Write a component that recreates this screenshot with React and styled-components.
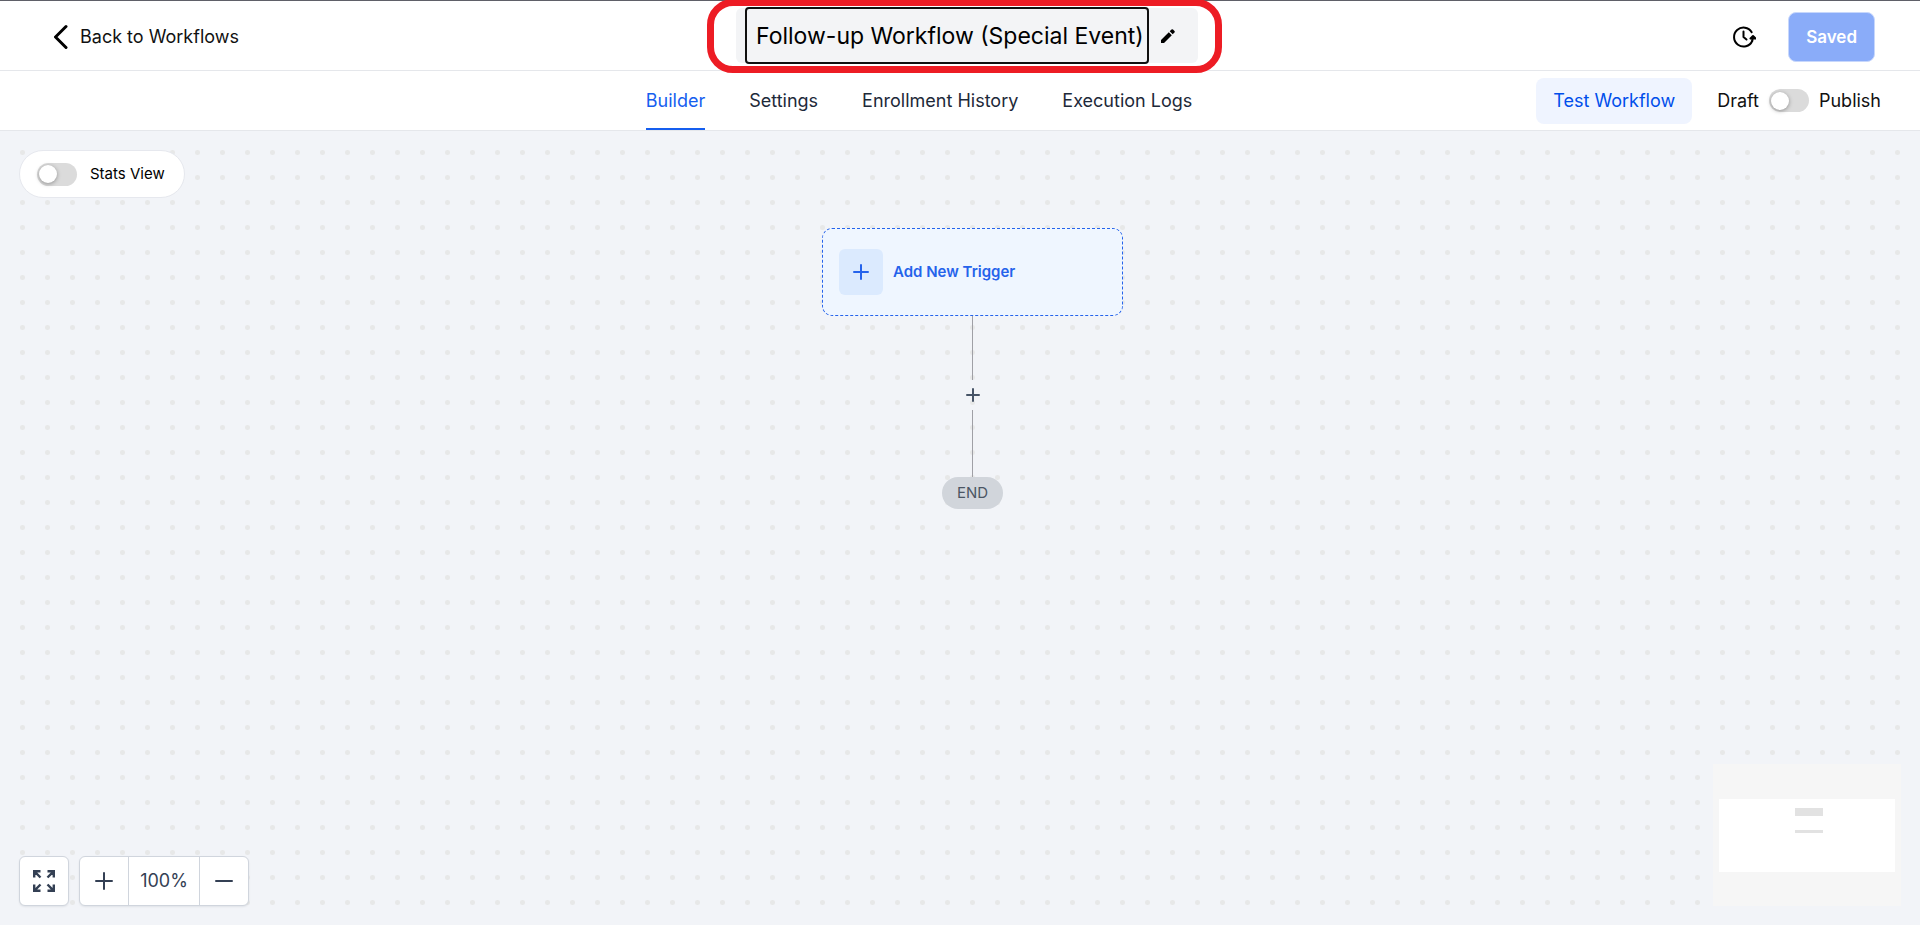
import { useState } from "react";
import styled, { createGlobalStyle } from "styled-components";

//Styles
const GlobalStyle = createGlobalStyle`
    *, *::before, *::after {
        box-sizing: border-box;
    }

    body {
        margin: 0;
        font-family: Inter, "Liberation Sans", sans-serif;
        font-size: 18px;
        line-height: 24px;
        color: #111111;
    }

    button, input {
        font: inherit;
        color: inherit;
    }

    button {
        padding: 0;
        border: 0;
        background: none;
        cursor: pointer;
    }

    svg {
        display: block;
    }
`

const Page = styled.div`
    display: flex;
    flex-direction: column;
    min-height: 100vh;
`

const TopBar = styled.header`
    display: grid;
    grid-template-columns: 1fr auto 1fr;
    align-items: center;
    height: 71px;
    padding: 2px 45px 0 54px;
    background: #ffffff;
    border-top: 1px solid #5f6068;
    border-bottom: 1px solid #e5e7eb;
`

const BackLink = styled.a`
    display: flex;
    align-items: center;
    gap: 12px;
    justify-self: start;
    color: #111111;
    text-decoration: none;
`

const Highlight = styled.div`
    position: relative;
    z-index: 1;
    margin: -4px 0 -2px;
    padding: 2px 17px 3px 22px;
    border: 7px solid #ed1c24;
    border-radius: 26px;
`

const NameBox = styled.div`
    display: flex;
    align-items: center;
    height: 55px;
    padding: 0 22px 0 9px;
    gap: 11px;
    background: #f3f4f6;
    border-radius: 6px;
`

const NameInput = styled.input`
    width: 404px;
    height: 57px;
    padding: 0 2px 0 9px;
    font-size: 23px;
    color: #000000;
    background: #f3f4f6;
    border: 2px solid #101010;
    border-radius: 4px;
    outline: none;
`

const TopActions = styled.div`
    display: flex;
    align-items: center;
    justify-self: end;
    gap: 32px;
`

const SavedButton = styled.button`
    height: 50px;
    padding: 0 17px;
    font-size: 17px;
    font-weight: 600;
    color: #ffffff;
    background: #8aacf9;
    border: 1px solid #c7d7fc;
    border-radius: 8px;
`

const TabBar = styled.nav`
    display: grid;
    grid-template-columns: 1fr auto 1fr;
    align-items: center;
    height: 60px;
    padding: 0 39px;
    background: #ffffff;
    border-bottom: 1px solid #e5e7eb;
`

const Tabs = styled.div`
    display: flex;
    grid-column: 2;
    gap: 44px;
    height: 100%;
    padding-right: 82px;
`

const Tab = styled.button`
    height: 100%;
    color: ${({ $active }) => $active ? '#155eef' : '#1d2939'};
    border-top: 2px solid transparent;
    border-bottom: 2px solid ${({ $active }) => $active ? '#155eef' : 'transparent'};
`

const TabActions = styled.div`
    display: flex;
    align-items: center;
    justify-self: end;
    gap: 25px;
`

const TestButton = styled.button`
    height: 46px;
    padding: 0 17px;
    color: #004eeb;
    background: #eff4ff;
    border-radius: 8px;
`

const PublishLabel = styled.label`
    display: flex;
    align-items: center;
    gap: 10px;
`

const Switch = styled.input`
    appearance: none;
    display: flex;
    align-items: center;
    width: 40px;
    height: 23px;
    margin: 0;
    padding: 2px;
    background: #dbdbdb;
    border-radius: 12px;
    cursor: pointer;

    &::before {
        content: "";
        width: 18px;
        height: 18px;
        background: #ffffff;
        border-radius: 50%;
        box-shadow: 0 1px 4px rgba(0, 0, 0, 0.35);
    }

    &:checked {
        justify-content: flex-end;
        background: #155eef;
    }
`

const Canvas = styled.main`
    display: flex;
    flex: 1;
    flex-direction: column;
    justify-content: space-between;
    padding: 19px;
    background-color: #f2f4f8;
    background-image: radial-gradient(circle, #e7e8e8 2px, transparent 3px);
    background-size: 25px 25px;
    background-position: 10px 9px;
`

const StatsLabel = styled.label`
    display: flex;
    align-items: center;
    align-self: flex-start;
    gap: 13px;
    height: 48px;
    padding: 0 19px 0 17px;
    font-size: 15px;
    color: #000000;
    background: #ffffff;
    border: 1px solid #e6e8ee;
    border-radius: 24px;
`

const Flow = styled.div`
    display: flex;
    flex: 1;
    flex-direction: column;
    align-items: center;
    padding: 30px 0 0 25px;
`

const Trigger = styled.button`
    display: flex;
    align-items: center;
    gap: 10px;
    width: 301px;
    height: 88px;
    padding: 0 16px;
    font-size: 15px;
    font-weight: 600;
    color: #2563eb;
    background: #eff6ff;
    border: 1px dashed #2563eb;
    border-radius: 10px;
`

const TriggerIcon = styled.span`
    display: grid;
    place-items: center;
    width: 44px;
    height: 46px;
    background: #dbeafe;
    border-radius: 6px;
`

const Line = styled.div`
    width: 1px;
    height: ${({ $height }) => $height}px;
    background: #a0a0a6;
`

const AddStep = styled.button`
    display: grid;
    place-items: center;
    width: 31px;
    height: 30px;
    color: #475467;
`

const End = styled.div`
    padding: 4px 15px;
    font-size: 15px;
    color: #4b5563;
    background: #d1d5db;
    border-radius: 16px;
`

const CanvasFooter = styled.footer`
    display: flex;
    align-items: flex-end;
    justify-content: space-between;
`

const Controls = styled.div`
    display: flex;
    gap: 10px;
    color: #344054;
`

const ControlGroup = styled.div`
    display: flex;
    height: 50px;
    background: #ffffff;
    border: 1px solid #d0d5dd;
    border-radius: 6px;
    box-shadow: 0 1px 2px rgba(16, 24, 40, 0.08);
`

const ControlButton = styled.button`
    display: grid;
    place-items: center;
    width: 48px;
`

const ZoomLevel = styled.output`
    display: grid;
    place-items: center;
    width: 72px;
    border: solid #d0d5dd;
    border-width: 0 1px;
`

const MiniMap = styled.div`
    display: flex;
    align-items: center;
    width: 188px;
    height: 142px;
    padding: 0 6px;
    background: #f6f6f6;
`

const MiniView = styled.div`
    display: flex;
    flex: 1;
    flex-direction: column;
    align-items: center;
    gap: 14px;
    height: 73px;
    padding: 9px 0 0 3px;
    background: #ffffff;
`

const MiniNode = styled.div`
    width: 28px;
    height: ${({ $height }) => $height}px;
    background: #e2e2e2;
`

//Icons
function BackIcon() {
    return (
        <svg width="14" height="26" viewBox="0 0 14 26" fill="none" stroke="#000" strokeWidth="3" strokeLinecap="round" strokeLinejoin="round" aria-hidden="true">
            <path d="M12 2.500 1.500 13 12 23.500" />
        </svg>
    )
}

function PencilIcon() {
    return (
        <svg width="16" height="16" viewBox="0 0 16 16" aria-hidden="true">
            <path d="M1 12v3h3l7.800-7.800-3-3zM9.700 3.300l3 3L14.500 4.500q.7-.8 0-1.500L13 1.500q-.8-.7-1.500 0z" />
        </svg>
    )
}

function HistoryIcon() {
    return (
        <svg width="24" height="24" viewBox="0 0 24 24" fill="none" stroke="#000" strokeWidth="2" strokeLinecap="round" strokeLinejoin="round" aria-hidden="true">
            <path d="M20.200 16a9.500 9.500 0 1 1-.5-8.800M11.500 6.500V12l3 2.500" />
            <path d="m21 11-2.500 2.500h5zM21 12l-.8 4" fill="#000" />
        </svg>
    )
}

function PlusIcon({ size }) {
    return (
        <svg width={size} height={size} viewBox={`0 0 ${size} ${size}`} stroke="currentColor" strokeWidth="2" strokeLinecap="round" aria-hidden="true">
            <path d={`M1 ${size / 2}H${size - 1}M${size / 2} 1V${size - 1}`} />
        </svg>
    )
}

function MinusIcon() {
    return (
        <svg width="18" height="18" viewBox="0 0 18 18" stroke="currentColor" strokeWidth="2" strokeLinecap="round" aria-hidden="true">
            <path d="M1 9h16" />
        </svg>
    )
}

function ExpandIcon() {
    return (
        <svg width="22" height="22" viewBox="0 0 22 22" fill="none" stroke="currentColor" strokeWidth="2.400" aria-hidden="true">
            <path d="M1.200 7.500V1.200h6.300M1.200 1.200 7.500 7.500M14.500 1.200h6.300v6.300M20.800 1.200l-6.300 6.300M1.200 14.500v6.300h6.300M1.200 20.800l6.300-6.300M14.500 20.800h6.300v-6.300M20.800 20.800l-6.300-6.300" />
        </svg>
    )
}

const tabs = ['Builder', 'Settings', 'Enrollment History', 'Execution Logs']

//Component
function App() {
    const [name, setName] = useState('Follow-up Workflow (Special Event)')
    const [activeTab, setActiveTab] = useState('Builder')
    const [zoom, setZoom] = useState(100)

    return (
        <Page>
            <GlobalStyle />
            <TopBar>
                <BackLink href="#workflows">
                    <BackIcon />
                    Back to Workflows
                </BackLink>
                <Highlight>
                    <NameBox>
                        <NameInput
                            aria-label="Workflow name"
                            value={name}
                            onChange={(e) => setName(e.target.value)}
                        />
                        <button aria-label="Edit name"><PencilIcon /></button>
                    </NameBox>
                </Highlight>
                <TopActions>
                    <button aria-label="Version history"><HistoryIcon /></button>
                    <SavedButton>Saved</SavedButton>
                </TopActions>
            </TopBar>
            <TabBar>
                <Tabs>
                    {tabs.map(tab => (
                        <Tab
                            key={tab}
                            $active={tab === activeTab}
                            onClick={() => setActiveTab(tab)}
                        >
                            {tab}
                        </Tab>
                    ))}
                </Tabs>
                <TabActions>
                    <TestButton>Test Workflow</TestButton>
                    <PublishLabel>
                        Draft
                        <Switch type="checkbox" role="switch" />
                        Publish
                    </PublishLabel>
                </TabActions>
            </TabBar>
            <Canvas>
                <StatsLabel>
                    <Switch type="checkbox" role="switch" />
                    Stats View
                </StatsLabel>
                <Flow>
                    <Trigger>
                        <TriggerIcon><PlusIcon size={16} /></TriggerIcon>
                        Add New Trigger
                    </Trigger>
                    <Line $height={64} />
                    <AddStep aria-label="Add step"><PlusIcon size={14} /></AddStep>
                    <Line $height={67} />
                    <End>END</End>
                </Flow>
                <CanvasFooter>
                    <Controls>
                        <ControlGroup>
                            <ControlButton aria-label="Fit view"><ExpandIcon /></ControlButton>
                        </ControlGroup>
                        <ControlGroup>
                            <ControlButton aria-label="Zoom in" onClick={() => setZoom(zoom + 10)}>
                                <PlusIcon size={18} />
                            </ControlButton>
                            <ZoomLevel>{zoom}%</ZoomLevel>
                            <ControlButton aria-label="Zoom out" onClick={() => setZoom(zoom - 10)}>
                                <MinusIcon />
                            </ControlButton>
                        </ControlGroup>
                    </Controls>
                    <MiniMap>
                        <MiniView>
                            <MiniNode $height={8} />
                            <MiniNode $height={3} />
                        </MiniView>
                    </MiniMap>
                </CanvasFooter>
            </Canvas>
        </Page>
    )
}

export default App
